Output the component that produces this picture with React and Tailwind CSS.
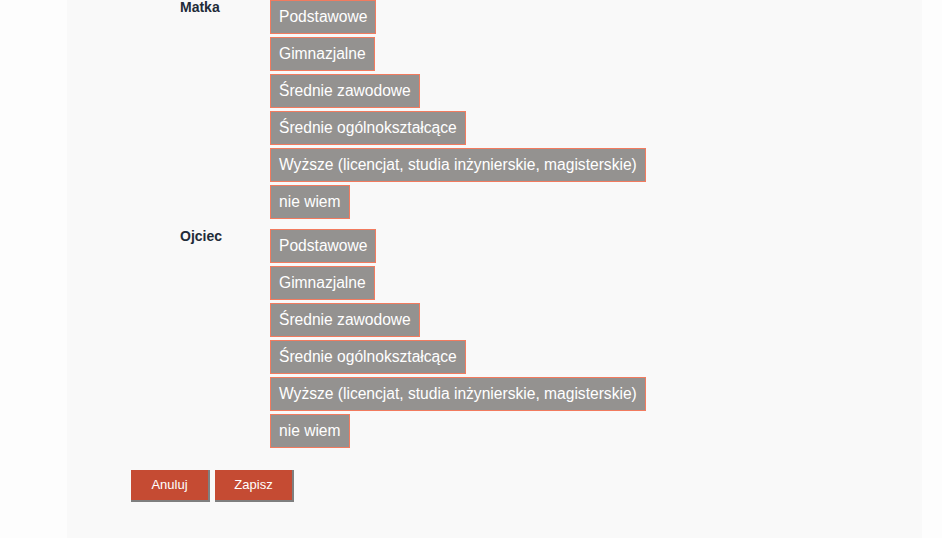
const levels = [
  "Podstawowe",
  "Gimnazjalne",
  "Średnie zawodowe",
  "Średnie ogólnokształcące",
  "Wyższe (licencjat, studia inżynierskie, magisterskie)",
  "nie wiem",
];

function Group({ label }) {
  return (
    <div className="flex">
      <div className="w-[90px] text-[14px] font-bold text-[#222b38] leading-[14px]">{label}</div>
      <div className="flex flex-col items-start gap-[3px]">
        {levels.map((l) => (
          <button
            key={l}
            type="button"
            className="h-[34px] px-[8px] border border-[#f27b5f] bg-[#949290] text-white text-[15.6px] leading-[32px] text-left cursor-pointer"
          >
            {l}
          </button>
        ))}
      </div>
    </div>
  );
}

export default function App() {
  return (
    <div className="min-h-[538px] bg-[#fdfdfd] font-['Liberation_Sans',sans-serif]">
      <div className="ml-[67px] w-[855px] min-h-[538px] bg-[#f9f9f9] pl-[64px]">
        <div className="pl-[49px] flex flex-col gap-[10px]">
          <Group label="Matka" />
          <Group label="Ojciec" />
        </div>
        <div className="flex gap-[5px] mt-[22px]">
          <button type="button" className="w-[79px] h-[32px] bg-[#c54b33] text-white text-[13px] border-r-2 border-b-2 border-[#7f7f7f]">
            Anuluj
          </button>
          <button type="button" className="w-[79px] h-[32px] bg-[#c54b33] text-white text-[13px] border-r-2 border-b-2 border-[#7f7f7f]">
            Zapisz
          </button>
        </div>
      </div>
    </div>
  );
}
